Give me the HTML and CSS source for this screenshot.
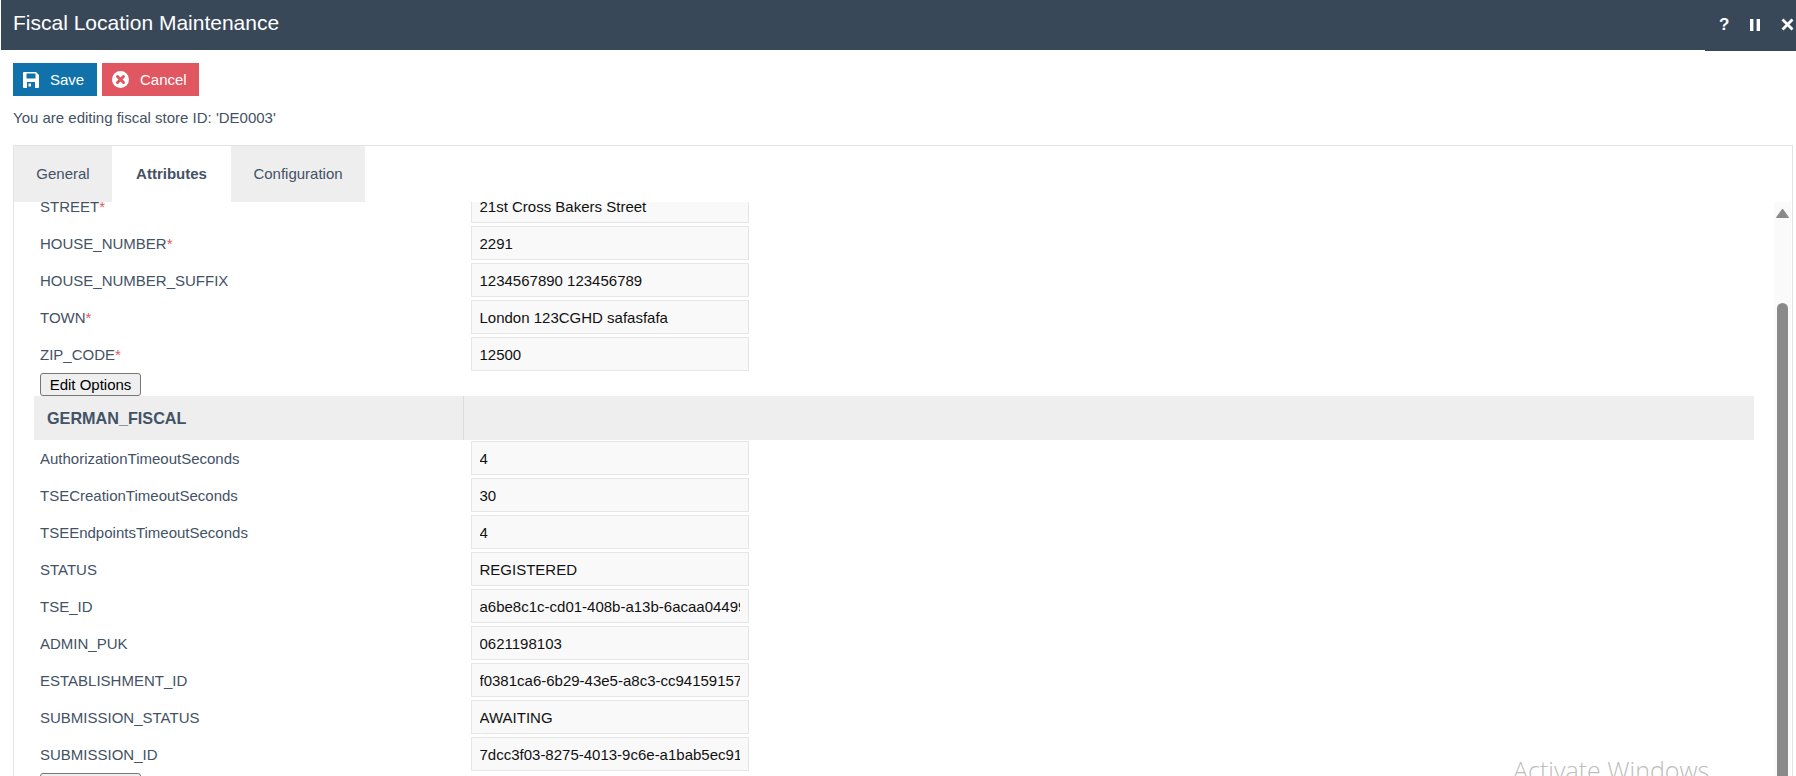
FILE: index.html
```html
<!DOCTYPE html>
<html lang="en">
<head>
<meta charset="utf-8">
<title>Fiscal Location Maintenance</title>
<link rel="stylesheet" href="styles.css">
</head>
<body>
<div class="window">
  <header class="titlebar">
    <h1 class="title">Fiscal Location Maintenance</h1>
    <div class="win-actions">
      <span class="win-help">?</span>
      <svg class="win-icon" width="10" height="14" viewBox="0 0 10 14"><path d="M0 1h3.4v12H0zM6.6 1H10v12H6.6z" fill="#fff"/></svg>
      <svg class="win-icon win-close" width="13" height="13" viewBox="0 0 13 13"><path d="M1.5 1.5l10 10M11.5 1.5l-10 10" stroke="#fff" stroke-width="2.8" fill="none"/></svg>
    </div>
  </header>
  <main class="body">
    <div class="toolbar">
      <button class="btn btn-save">
        <svg class="btn-icon" width="16" height="16" viewBox="0 0 16 16"><path fill="#fff" fill-rule="evenodd" d="M1 0h12l3 3v12a1 1 0 0 1-1 1H1a1 1 0 0 1-1-1V1a1 1 0 0 1 1-1zM3.500 1.500V6.500H12.500V1.500zM4 10V16H12V10z"/><path fill="#fff" d="M5.500 11.500h2.500v3H5.500z"/></svg>
        <span>Save</span>
      </button>
      <button class="btn btn-cancel">
        <svg class="btn-icon" width="17" height="17" viewBox="0 0 17 17"><circle cx="8.500" cy="8.500" r="8.500" fill="#fff"/><path d="M5.500 5.500l6 6M11.500 5.500l-6 6" stroke="#e05661" stroke-width="3" stroke-linecap="round" fill="none"/></svg>
        <span>Cancel</span>
      </button>
    </div>
    <p class="note">You are editing fiscal store ID: 'DE0003'</p>
    <section class="panel">
      <nav class="tabs">
        <a class="tab">General</a>
        <a class="tab tab-active">Attributes</a>
        <a class="tab">Configuration</a>
      </nav>
      <div class="scroller">
        <div class="scroll-content">
          <div class="rows rows-first">
            <div class="row"><label class="lbl">STREET<span class="req">*</span></label><input class="field" value="21st Cross Bakers Street"></div>
            <div class="row"><label class="lbl">HOUSE_NUMBER<span class="req">*</span></label><input class="field" value="2291"></div>
            <div class="row"><label class="lbl">HOUSE_NUMBER_SUFFIX</label><input class="field" value="1234567890 123456789"></div>
            <div class="row"><label class="lbl">TOWN<span class="req">*</span></label><input class="field" value="London 123CGHD safasfafa"></div>
            <div class="row"><label class="lbl">ZIP_CODE<span class="req">*</span></label><input class="field" value="12500"></div>
          </div>
          <button class="edit-btn">Edit Options</button>
          <div class="section-head"><div class="section-name">GERMAN_FISCAL</div><div class="section-rest"></div></div>
          <div class="rows">
            <div class="row"><label class="lbl">AuthorizationTimeoutSeconds</label><input class="field" value="4"></div>
            <div class="row"><label class="lbl">TSECreationTimeoutSeconds</label><input class="field" value="30"></div>
            <div class="row"><label class="lbl">TSEEndpointsTimeoutSeconds</label><input class="field" value="4"></div>
            <div class="row"><label class="lbl">STATUS</label><input class="field" value="REGISTERED"></div>
            <div class="row"><label class="lbl">TSE_ID</label><input class="field" value="a6be8c1c-cd01-408b-a13b-6acaa04499c1"></div>
            <div class="row"><label class="lbl">ADMIN_PUK</label><input class="field" value="0621198103"></div>
            <div class="row"><label class="lbl">ESTABLISHMENT_ID</label><input class="field" value="f0381ca6-6b29-43e5-a8c3-cc94159157a2"></div>
            <div class="row"><label class="lbl">SUBMISSION_STATUS</label><input class="field" value="AWAITING"></div>
            <div class="row"><label class="lbl">SUBMISSION_ID</label><input class="field" value="7dcc3f03-8275-4013-9c6e-a1bab5ec91d3"></div>
          </div>
          <button class="edit-btn">Edit Options</button>
        </div>
        <div class="scrollbar">
          <svg class="scroll-arrow" width="13" height="10" viewBox="0 0 13 10"><path d="M6.500 1L12.500 9.500H.5z" fill="#8a8a8a" stroke="#8a8a8a" stroke-linejoin="round"/></svg>
          <div class="scroll-thumb"></div>
        </div>
      </div>
    </section>
  </main>
</div>
<div class="watermark">Activate Windows</div>
</body>
</html>
```
FILE: styles.css
```css
* { box-sizing: border-box; }
html, body { margin: 0; height: 100%; overflow: hidden; background: #fff; }
body { font-family: "Liberation Sans", Arial, sans-serif; color: #435265; font-size: 15px; position: relative; }
.window { height: 776px; display: flex; flex-direction: column; padding-left: 1px; }
.titlebar { height: 50px; flex: none; background: #394859; display: flex; align-items: flex-start; justify-content: space-between; position: relative; }
.title { margin: 0; padding: 10px 0 0 12px; font-size: 21px; line-height: 25px; font-weight: 400; color: #fff; }
.win-actions { height: 51px; width: 91px; background: #394859; display: flex; align-items: flex-start; position: relative; padding: 15px 0 0 14px; }
.win-help { color: #fff; font-size: 17px; line-height: 20px; font-weight: 700; width: 31px; }
.win-icon { margin-top: 3px; display: block; }
.win-close { margin-left: 21px; }
.body { flex: 1; min-height: 0; display: flex; flex-direction: column; padding: 13px 3px 0 12px; }
.toolbar { display: flex; gap: 5px; flex: none; }
.btn { height: 33px; border: 0; color: #fff; font: 15px/33px "Liberation Sans", Arial, sans-serif; display: flex; align-items: center; padding: 0; }
.btn-save { width: 84px; background: #1172ab; padding-left: 10px; }
.btn-save .btn-icon { margin-right: 11px; }
.btn-cancel { width: 97px; background: #e05661; padding-left: 10px; }
.btn-cancel .btn-icon { margin-right: 11px; }
.note { margin: 0; padding-top: 14px; height: 49px; line-height: 16px; font-size: 15px; flex: none; }
.panel { flex: 1; min-height: 0; border: 2px solid #e3e3e3; border-bottom: 0; border-width: 1.5px 1.5px 0; display: flex; flex-direction: column; }
.tabs { display: flex; flex: none; height: 56px; }
.tab { background: #eeeeee; display: flex; align-items: center; justify-content: center; font-size: 15px; padding-bottom: 1px; }
.tab:nth-child(1) { width: 98px; }
.tab:nth-child(2) { width: 119px; }
.tab:nth-child(3) { width: 134px; }
.tab-active { background: #fff; font-weight: 700; }
.scroller { flex: 1; min-height: 0; display: flex; overflow: hidden; }
.scroll-content { flex: 1; min-width: 0; padding: 0 20px 0 20px; }
.rows-first { margin-top: -14px; }
.row { height: 37px; display: flex; align-items: center; }
.lbl { width: 437px; padding-left: 6px; flex: none; font-size: 15px; margin-top: -1px; }
.req { color: #e05661; }
.field { width: 278px; height: 34px; border: 2px solid #e6e6e6; border-width: 1.5px; background: #f9f9f9; color: #111; font: 15px "Liberation Sans", Arial, sans-serif; padding: 0 8px 0 7.5px; margin-top: -1px; }
.edit-btn { display: block; margin-left: 6px; width: 101px; height: 23px; padding: 0; background: #efefef; border: 1px solid #767676; border-radius: 3px; color: #000; font: 15px "Liberation Sans", Arial, sans-serif; }
.section-head { height: 44px; display: flex; background: #eeeeee; }
.section-name { width: 430px; padding-left: 13px; font-size: 16.2px; font-weight: 700; line-height: 45px; border-right: 1px solid #dcdcdc; }
.scrollbar { width: 17px; flex: none; background: #fafafa; margin-right: 1px; display: flex; flex-direction: column; align-items: center; }
.scroll-arrow { margin-top: 6px; display: block; }
.scroll-thumb { width: 11px; flex: 1; margin-top: 85px; background: #8a8a8a; border-radius: 6px 6px 0 0; }
.watermark { position: absolute; left: 1513px; top: 754px; font-family: "Open Sans", sans-serif; font-weight: 300; font-size: 25px; line-height: 32px; color: #bdbdbd; white-space: nowrap; }
```
